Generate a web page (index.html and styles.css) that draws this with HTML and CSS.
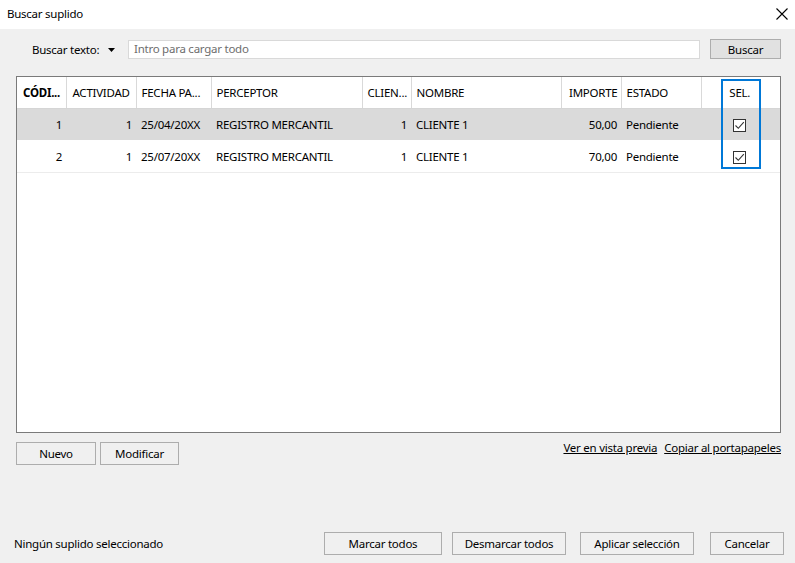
FILE: index.html
```html
<!DOCTYPE html>
<html lang="es">
<head>
<meta charset="utf-8">
<title>Buscar suplido</title>
<link rel="stylesheet" href="styles.css">
</head>
<body>
<div class="window">
  <div class="titlebar">
    <span class="title">Buscar suplido</span>
    <svg class="close" width="12" height="12" viewBox="0 0 12 12"><path d="M0.5 0.5 L11.5 11.5 M11.5 0.5 L0.5 11.5" stroke="#000" stroke-width="1.1" fill="none"/></svg>
  </div>
  <div class="content">
    <div class="search-row">
      <span class="search-label">Buscar texto:</span>
      <svg class="drop" width="7" height="4" viewBox="0 0 7 4"><path d="M0 0 H7 L3.5 4 Z" fill="#000"/></svg>
      <div class="search-input">Intro para cargar todo</div>
      <button class="btn btn-search">Buscar</button>
    </div>

    <div class="grid-wrap">
      <table class="grid">
        <colgroup>
          <col class="c1"><col class="c2"><col class="c3"><col class="c4"><col class="c5"><col class="c6"><col class="c7"><col class="c8"><col class="c9">
        </colgroup>
        <thead>
          <tr>
            <th class="bold">CÓDI...</th>
            <th class="act">ACTIVIDAD</th>
            <th>FECHA PA...</th>
            <th>PERCEPTOR</th>
            <th>CLIEN...</th>
            <th>NOMBRE</th>
            <th class="r">IMPORTE</th>
            <th>ESTADO</th>
            <th class="center">SEL.</th>
          </tr>
        </thead>
        <tbody>
          <tr class="sel">
            <td class="r">1</td>
            <td class="r">1</td>
            <td>25/04/20XX</td>
            <td class="pad">REGISTRO MERCANTIL</td>
            <td class="r">1</td>
            <td class="pad">CLIENTE 1</td>
            <td class="r">50,00</td>
            <td class="pad">Pendiente</td>
            <td class="center"><span class="chk"><svg width="11" height="11" viewBox="0 0 11 11"><path d="M1.5 5.5 L4.3 8.3 L9.8 2.2" stroke="#333" stroke-width="1.1" fill="none"/></svg></span></td>
          </tr>
          <tr>
            <td class="r">2</td>
            <td class="r">1</td>
            <td>25/07/20XX</td>
            <td class="pad">REGISTRO MERCANTIL</td>
            <td class="r">1</td>
            <td class="pad">CLIENTE 1</td>
            <td class="r">70,00</td>
            <td class="pad">Pendiente</td>
            <td class="center"><span class="chk"><svg width="11" height="11" viewBox="0 0 11 11"><path d="M1.5 5.5 L4.3 8.3 L9.8 2.2" stroke="#333" stroke-width="1.1" fill="none"/></svg></span></td>
          </tr>
        </tbody>
      </table>
      <div class="focus-box"></div>
    </div>

    <div class="under-row">
      <div class="left-btns">
        <button class="btn btn-small">Nuevo</button>
        <button class="btn btn-small">Modificar</button>
      </div>
      <div class="links">
        <a class="link">Ver en vista previa</a>
        <a class="link">Copiar al portapapeles</a>
      </div>
    </div>

    <div class="footer">
      <span class="status">Ningún suplido seleccionado</span>
      <div class="footer-btns">
        <button class="btn b-marcar">Marcar todos</button>
        <button class="btn b-desm">Desmarcar todos</button>
        <button class="btn b-aplicar">Aplicar selección</button>
        <button class="btn b-cancel">Cancelar</button>
      </div>
    </div>
  </div>
</div>
</body>
</html>
```

FILE: styles.css
```css
* { box-sizing: border-box; }
html, body {
  margin: 0;
  padding: 0;
  width: 795px;
  height: 563px;
  overflow: hidden;
  background: #f0f0f0;
  font-family: "Noto Sans", "Open Sans", sans-serif;
  font-size: 11.5px;
  letter-spacing: -0.25px;
  color: #000;
}
.window {
  display: flex;
  flex-direction: column;
  width: 795px;
  height: 563px;
}
.titlebar {
  height: 29px;
  background: #fff;
  display: flex;
  align-items: center;
  justify-content: space-between;
  padding: 0 7px 2px 7px;
}
.content {
  flex: 1;
  display: flex;
  flex-direction: column;
  background: #f0f0f0;
}
.search-row {
  display: flex;
  align-items: center;
  height: 20px;
  margin-top: 10px;
  padding-left: 32px;
}
.search-label { width: 76px; }
.drop { margin-right: 13px; margin-top: 1px; }
.search-input {
  width: 572px;
  height: 19px;
  background: #fff;
  border: 1px solid #d9d9d9;
  color: #6d6d6d;
  padding-left: 5px;
  line-height: 16px;
}
.btn {
  font-family: inherit;
  font-size: 11.5px;
  letter-spacing: -0.25px;
  color: #000;
  background: #f0f0f0;
  border: 1px solid #adadad;
  padding: 0;
  margin: 0;
  cursor: default;
}
.btn-search {
  margin-left: 10px;
  width: 71px;
  height: 20px;
  background: #e1e1e1;
}
.grid-wrap {
  position: relative;
  margin: 17px 0 0 16px;
  width: 765px;
  height: 357px;
  background: #fff;
  border: 1px solid #7a7a7a;
}
.grid {
  border-collapse: collapse;
  table-layout: fixed;
  width: 763px;
}
.c1 { width: 49px; }
.c2 { width: 70px; }
.c3 { width: 75px; }
.c4 { width: 151px; }
.c5 { width: 49px; }
.c6 { width: 150px; }
.c7 { width: 60px; }
.c8 { width: 80px; }
.c9 { width: 79px; }
.grid th {
  height: 31px;
  font-weight: normal;
  text-align: left;
  padding: 0 4px 0 5px;
  border-right: 1px solid #d9d9d9;
  border-bottom: 1px solid #d5d5d5;
  white-space: nowrap;
  overflow: hidden;
}
.grid th:last-child { border-right: none; }
.grid th.bold { font-weight: bold; padding-left: 6px; }
.grid th.act { padding-left: 6px; }
.grid th.r { text-align: right; padding-right: 3px; }
.grid th.center { text-align: center; padding-left: 2px; }
.grid td {
  height: 32px;
  padding: 0 4px 0 5px;
  white-space: nowrap;
  overflow: hidden;
  border-bottom: 1px solid #ececec;
}
.grid td.r { text-align: right; padding-right: 4px; }
.grid td.center { text-align: center; padding-left: 2px; }
.grid tr.sel td { background: #dadada; border-bottom: 1px solid #fff; }
.chk {
  display: inline-block;
  width: 13px;
  height: 13px;
  border: 1px solid #333;
  background: #fff;
  vertical-align: middle;
  line-height: 0;
}
.chk svg { display: block; margin: 0; }
.focus-box {
  position: absolute;
  left: 704px;
  top: 2px;
  width: 40px;
  height: 90px;
  border: 2px solid #0078d7;
  pointer-events: none;
}
.under-row {
  display: flex;
  justify-content: space-between;
  align-items: flex-start;
  margin-top: 9px;
  padding: 0 14px 0 16px;
}
.left-btns { display: flex; gap: 4px; }
.btn-small { width: 80px; height: 23px; }
.btn-small + .btn-small { width: 79px; }
.links { display: flex; gap: 7px; margin-top: -2px; }
.link { text-decoration: underline; color: #000; }
.footer {
  margin-top: auto;
  margin-bottom: 8px;
  display: flex;
  align-items: center;
  justify-content: space-between;
  padding: 0 11px 0 14px;
}
.footer-btns { display: flex; }
.footer-btns .btn { height: 23px; }
.b-marcar { width: 118px; }
.b-desm { width: 114px; margin-left: 10px; }
.b-aplicar { width: 114px; margin-left: 14px; }
.b-cancel { width: 74px; margin-left: 16px; }
```
